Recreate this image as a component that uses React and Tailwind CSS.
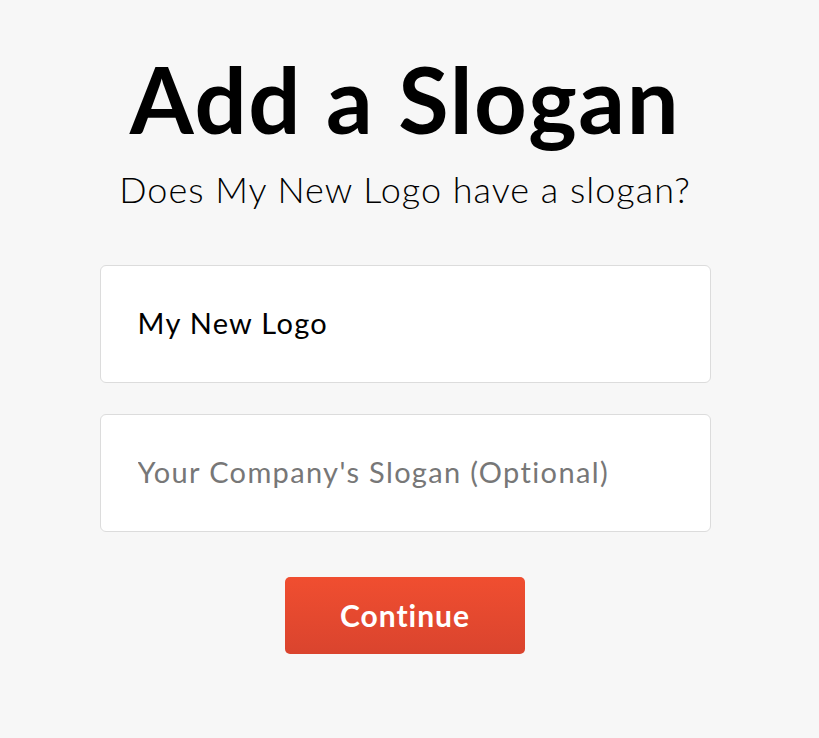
export default function App() {
    return (
        <div className="min-h-[738px] w-full bg-[#f7f7f7] font-['Lato',sans-serif]">
            <div className="flex flex-col items-center pt-[44px] pr-[9px]">
                <h1 className="text-[92px] font-bold leading-[110px] tracking-[1.6px] text-black">Add a Slogan</h1>
                <p className="mt-[13px] text-[36px] font-light leading-[44px] tracking-[1px] text-black">Does My New Logo have a slogan?</p>

                <div className="mt-[54px] flex w-[611px] flex-col gap-[31px]">
                    <input
                        type="text"
                        defaultValue="My New Logo"
                        className="h-[118px] w-full rounded-[6px] border border-[#dcdcdc] bg-white px-[37px] pb-[3px] text-[29px] tracking-[1.3px] text-black outline-none"
                    />
                    <input
                        type="text"
                        placeholder="Your Company's Slogan (Optional)"
                        className="h-[118px] w-full rounded-[6px] border border-[#dcdcdc] bg-white px-[37px] pb-[3px] text-[29px] tracking-[1.35px] text-black outline-none placeholder:text-[#777]"
                    />
                </div>

                <button className="mt-[45px] h-[77px] w-[240px] rounded-[5px] bg-gradient-to-b from-[#f04e30] to-[#da442e] text-[30px] font-bold tracking-[1px] text-white">
                    Continue
                </button>
            </div>
        </div>
    );
}
